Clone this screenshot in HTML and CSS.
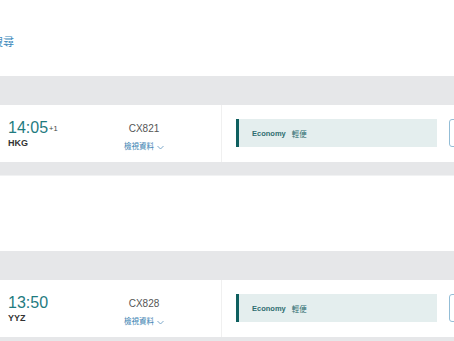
FILE: index.html
```html
<!DOCTYPE html>
<html lang="zh-Hant">

<head>
    <meta charset="UTF-8">
    <meta name="viewport" content="width=device-width, initial-scale=1.0">
    <title>航班選擇</title>
    <link rel="stylesheet" href="styles.css">
</head>

<body>
    <div class="top">
        <a class="research" href="#">重新搜尋</a>
    </div>

    <div class="leg">
        <div class="leg-head"></div>
        <div class="flight">
            <div class="flight-info">
                <div class="time-box">
                    <div class="time">14:05<sup>+1</sup></div>
                    <div class="port">HKG</div>
                </div>
                <div class="flight-no">
                    <div class="code">CX821</div>
                    <a class="detail" href="#">檢視資料
                        <svg width="7" height="5" viewBox="0 0 7 5"><path d="M0.5 1 L3.5 4 L6.5 1" fill="none" stroke="#6f9fc4" stroke-width="0.9"/></svg>
                    </a>
                </div>
            </div>
            <div class="fares">
                <div class="cabin"><b>Economy</b><span>輕便</span></div>
                <div class="price"></div>
            </div>
        </div>
        <div class="leg-foot"></div>
    </div>

    <div class="gap"></div>

    <div class="leg">
        <div class="leg-head"></div>
        <div class="flight">
            <div class="flight-info">
                <div class="time-box">
                    <div class="time">13:50</div>
                    <div class="port">YYZ</div>
                </div>
                <div class="flight-no">
                    <div class="code">CX828</div>
                    <a class="detail" href="#">檢視資料
                        <svg width="7" height="5" viewBox="0 0 7 5"><path d="M0.5 1 L3.5 4 L6.5 1" fill="none" stroke="#6f9fc4" stroke-width="0.9"/></svg>
                    </a>
                </div>
            </div>
            <div class="fares">
                <div class="cabin"><b>Economy</b><span>輕便</span></div>
                <div class="price"></div>
            </div>
        </div>
        <div class="leg-foot"></div>
    </div>
</body>

</html>
```

FILE: styles.css
```css
body {
    margin: 0;
    background-color: #fff;
    font-family: "Liberation Sans", "Noto Sans CJK TC", sans-serif;
    overflow: hidden;
}

a {
    text-decoration: none;
}

.top {
    height: 76px;
    padding-top: 35px;
    box-sizing: border-box;
}

.research {
    display: block;
    margin-left: -30px;
    font-size: 11px;
    line-height: 14px;
    color: #3b87bb;
    white-space: nowrap;
}

.leg-head {
    height: 29px;
    background-color: #e6e7e9;
}

.leg-foot {
    height: 13px;
    background-color: #e6e7e9;
    border-bottom: 1px solid #f1f2f3;
}

.gap {
    height: 75px;
}

.flight {
    display: flex;
    height: 57px;
    background-color: #fff;
}

.flight-info {
    display: flex;
    width: 222px;
    flex-shrink: 0;
    border-right: 1px solid #f0f0f0;
    box-sizing: border-box;
}

.time-box {
    width: 116px;
    padding: 15px 0 0 8px;
    box-sizing: border-box;
}

.time {
    font-size: 16px;
    line-height: 16px;
    color: #1f7b7f;
    white-space: nowrap;
}

.time sup {
    font-size: 7.5px;
    color: #444;
    vertical-align: top;
    position: relative;
    top: 1px;
    margin-left: 1px;
}

.port {
    margin-top: 2px;
    font-size: 9px;
    line-height: 10px;
    font-weight: bold;
    color: #333;
}

.flight-no {
    width: 56px;
    padding-top: 18px;
    text-align: center;
}

.code {
    font-size: 10px;
    line-height: 12px;
    color: #555;
}

.detail {
    display: inline-flex;
    align-items: center;
    gap: 3px;
    margin-top: 1px;
    font-size: 7.5px;
    line-height: 10px;
    color: #3a7fb1;
    white-space: nowrap;
}

.fares {
    display: flex;
    gap: 12px;
    padding: 14px 0 0 14px;
}

.cabin {
    display: flex;
    align-items: center;
    gap: 6px;
    width: 201px;
    height: 28px;
    padding-left: 13px;
    box-sizing: border-box;
    background-color: #e4eeee;
    border-left: 3px solid #0e5f5f;
    font-size: 7.5px;
    color: #2e6d70;
}

.cabin b {
    font-weight: bold;
}

.price {
    width: 120px;
    height: 28px;
    box-sizing: border-box;
    border: 1px solid #93bdd6;
    border-radius: 3px;
}
```
